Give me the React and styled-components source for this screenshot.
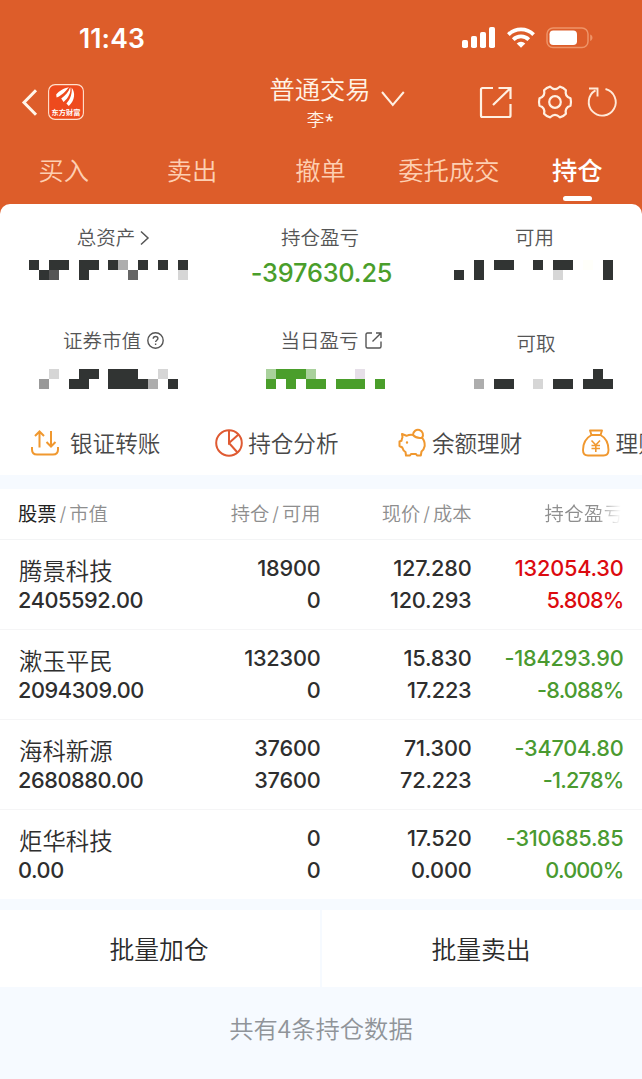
import styled, { createGlobalStyle } from "styled-components";

const GlobalStyle = createGlobalStyle`
  * {
    box-sizing: border-box;
  }
  body {
    margin: 0;
    background: #f6faff;
    font-family: "Noto Sans CJK SC", sans-serif;
    overflow: hidden;
  }
  svg {
    display: block;
    flex-shrink: 0;
    overflow: visible;
  }
`;

const Page = styled.div`
  width: 642px;
  height: 1079px;
  overflow: hidden;
  background: #f6faff;
  color: #333;
`;

const Header = styled.header`
  height: 214px;
  background: #dd5d2a;
  color: #fff;
`;

const StatusBar = styled.div`
  display: flex;
  align-items: center;
  justify-content: space-between;
  height: 75px;
  padding: 0 48px 0 79px;
`;

const Time = styled.span`
  font-family: Inter, sans-serif;
  font-size: 26.5px;
  font-weight: 600;
  letter-spacing: 0.1px;
`;

const StatusIcons = styled.div`
  display: flex;
  align-items: center;
  gap: 11px;
`;

const TitleBar = styled.div`
  display: grid;
  grid-template-columns: 1fr auto 1fr;
  align-items: center;
  height: 54px;
`;

const TitleLeft = styled.div`
  display: flex;
  align-items: center;
  gap: 11px;
  padding-left: 22px;
`;

const Title = styled.div`
  margin: -3px 2px -4px 0;
  text-align: center;
  color: #fff3e6;
`;

const TitleName = styled.div`
  font-size: 25.3px;
  font-weight: 350;
  line-height: 33px;
`;

const TitleUser = styled.div`
  font-size: 17.5px;
  font-weight: 350;
  line-height: 28px;

  span {
    display: inline-block;
    margin-left: 1px;
    font-family: Roboto, sans-serif;
    font-size: 19px;
    font-weight: 400;
    line-height: 20px;
    vertical-align: -1px;
  }
`;

const TitleRight = styled.div`
  display: flex;
  align-items: center;
  padding: 0 25px 0 8px;
`;

const DownWrap = styled.div`
  margin-top: -6px;
`;

const Actions = styled.div`
  display: flex;
  align-items: center;
  gap: 15px;
  margin-left: auto;

  svg:first-child {
    margin-right: 11px;
  }
`;

const Tabs = styled.nav`
  display: grid;
  grid-template-columns: repeat(5, 1fr);
  height: 75px;
`;

const Tab = styled.div`
  display: flex;
  flex-direction: column;
  align-items: center;
  font-size: 25.3px;
  line-height: 36px;
  padding: 22px 1px 0 0;
  font-weight: ${(props) => (props.$active ? 500 : 350)};
  color: ${(props) => (props.$active ? "#fff" : "#fdcfb2")};

  &::after {
    content: "";
    width: 29px;
    height: 5px;
    margin-top: 9px;
    border-radius: 3px;
    background: ${(props) => (props.$active ? "#fff" : "transparent")};
  }
`;

const Summary = styled.section`
  height: 271px;
  margin-top: -10px;
  background: #fff;
  border-radius: 10px 10px 0 0;
  overflow: hidden;
`;

const Stats = styled.div`
  display: grid;
  grid-template-columns: 216px 208px 218px;
  grid-template-rows: 103px 104px;
`;

const Stat = styled.div`
  display: flex;
  flex-direction: column;
  align-items: center;
  padding-top: ${(props) => props.$top || 18}px;
`;

const StatLabel = styled.div`
  display: flex;
  align-items: center;
  gap: ${(props) => props.$gap || 4}px;
  height: 28px;
  padding-left: ${(props) => props.$shift || 0}px;
  font-size: 19.5px;
  font-weight: 350;
  color: #555;

  svg {
    margin-top: 3px;
  }
`;

const StatValue = styled.div`
  font-family: Inter, sans-serif;
  font-size: 25.3px;
  font-weight: 500;
  line-height: 32px;
  letter-spacing: -0.15px;
  margin-top: 7px;
  padding-left: 3px;
  color: #4a9e2b;
`;

const MosaicBox = styled.div`
  margin-top: ${(props) => props.$gap}px;
  padding-left: ${(props) => props.$shift || 0}px;
`;

const Shortcuts = styled.div`
  display: flex;
  height: 63px;
  padding-left: 31px;
`;

const Shortcut = styled.div`
  display: flex;
  flex: 0 0 183.7px;
  align-items: center;
  gap: ${(props) => props.$gap || 5.5}px;
  height: 63px;
  font-size: 22.6px;
  font-weight: 350;
  white-space: nowrap;
  color: #484848;
`;

const Holdings = styled.section`
  margin-top: 14px;
  background: #fff;
`;

const Row = styled.div`
  display: grid;
  grid-template-columns: 150px 152.5px 151px 152px;
  padding: 0 18px 0 18px;
`;

const HeadRow = styled(Row)`
  height: 51px;
  align-items: center;
  padding-bottom: 2px;
  border-bottom: 1px solid #f3f4f5;
  font-size: 19.3px;
  font-weight: 350;
  color: #8e8e8e;
`;

const HeadCell = styled.div`
  white-space: nowrap;
  text-align: ${(props) => (props.$left ? "left" : "right")};

  b {
    font-weight: 400;
    color: #222;
  }
  i {
    font-family: Inter, sans-serif;
    font-style: normal;
    margin: 0 3px;
  }
`;

const FadeCell = styled(HeadCell)`
  letter-spacing: 0.5px;
  mask-image: linear-gradient(to right, #000 82%, transparent 98%);
`;

const StockRow = styled(Row)`
  height: 90px;
  padding-top: 13px;
  border-bottom: 1px solid #f5f5f6;

  &:last-child {
    height: 89px;
    border-bottom: 0;
  }
`;

const Cell = styled.div`
  display: flex;
  flex-direction: column;
  align-items: ${(props) => (props.$left ? "flex-start" : "flex-end")};
  font-family: Inter, sans-serif;
  font-size: 21.7px;
  font-weight: 500;
  line-height: 31.5px;
  letter-spacing: ${(props) => (props.$left ? -0.4 : -0.2)}px;
  color: ${(props) => props.$color || "#2e2e2e"};
`;

const StockName = styled.span`
  font-family: "Noto Sans CJK SC", sans-serif;
  font-size: 23.4px;
  font-weight: 350;
  letter-spacing: 0;
  line-height: 34px;
  margin: 0 0 -2.5px 1px;
`;

const Rate = styled.span`
  letter-spacing: -0.8px;
`;

const BatchBar = styled.div`
  display: grid;
  grid-template-columns: 1fr 1fr;
  gap: 2px;
  height: 77px;
  margin-top: 11px;
`;

const BatchButton = styled.button`
  border: 0;
  padding: 0 2px 1px 0;
  background: #fff;
  color: #2a2a2a;
  font-family: inherit;
  font-size: 24.8px;
  font-weight: 350;
`;

const Footer = styled.footer`
  padding-top: 23px;
  text-align: center;
  font-size: 24.3px;
  line-height: 36px;
  font-weight: 350;
  color: #909499;
`;

const cellColors = {
  "#": "#313433",
  d: "#555",
  m: "#666",
  g: "#999",
  b: "#adadad",
  l: "#d6d6d6",
  y: "#fffffa",
  G: "#4a9e2b",
  p: "#a9d19c",
  e: "#e6dfe8",
};

const Mosaic = ({ rows, gap, shift }) => {
  const size = 9.93;
  return (
    <MosaicBox $gap={gap} $shift={shift}>
      <svg width={rows[0].length * size} height="20" shapeRendering="crispEdges">
        {rows.map((row, y) =>
          row.split("").map((c, x) =>
            c === "." ? null : (
              <rect key={`${x}-${y}`} x={x * size} y={y * 10} width={size} height="10" fill={cellColors[c]} />
            )
          )
        )}
      </svg>
    </MosaicBox>
  );
};

const Signal = () => (
  <svg width="34" height="22" viewBox="0 0 34 22" fill="#fff">
    <rect x="0" y="13" width="6" height="8" rx="1.8" />
    <rect x="9" y="9" width="6" height="12" rx="1.8" />
    <rect x="18" y="5" width="6" height="16" rx="1.8" />
    <rect x="27" y="0" width="6" height="21" rx="1.8" />
  </svg>
);

const Wifi = () => (
  <svg width="28" height="21" viewBox="0 0 28 21">
    <g fill="none" stroke="#fff" strokeWidth="3.8">
      <path d="M1.4 7.6a18 18 0 0 1 25.2 0" />
      <path d="M6.2 12.6a11.2 11.2 0 0 1 15.6 0" />
    </g>
    <path d="M9.7 16.4a6.3 6.3 0 0 1 8.6 0L14 20.8z" fill="#fff" />
  </svg>
);

const Battery = () => (
  <svg width="48" height="22" viewBox="0 0 48 22">
    <rect x="1" y="1" width="41" height="19.5" rx="6" fill="none" stroke="#ee9468" strokeWidth="1.5" />
    <rect x="3.5" y="3.5" width="27.5" height="14.5" rx="3.8" fill="#fff" />
    <path d="M44.2 7.6c3 1 3 5.4 0 6.4z" fill="#ee9468" />
  </svg>
);

const BackIcon = () => (
  <svg width="15" height="27" viewBox="0 0 15 27" fill="none" stroke="#fff6ea" strokeWidth="3">
    <path d="M14 1.2 2 13.5 14 25.8" />
  </svg>
);

const BrandLogo = () => (
  <svg width="36" height="36" viewBox="0 0 36 36">
    <rect x="0.6" y="0.6" width="34.8" height="34.8" rx="6.5" fill="#ee4a1d" stroke="#ffe2cf" strokeWidth="1.1" />
    <path d="M8.2 10.6C11 7 15.5 4 21 3.2C18 6.5 14 11.5 8.6 13.6z" fill="#fff" />
    <path d="M13.2 14.6C17 12 20.5 8 22.2 3.3C23.4 8 20.5 14 15.6 18z" fill="#fff" />
    <path d="M18.4 19.4C22.5 15.5 24.4 9 23.6 3.6C27.6 8.5 27 16.5 20.8 22z" fill="#fff" />
    <text x="18" y="31" textAnchor="middle" fontSize="7.2" fontWeight="700" fill="#fff">
      东方财富
    </text>
  </svg>
);

const DownIcon = () => (
  <svg width="24" height="16" viewBox="0 0 24 16" fill="none" stroke="#fff0e2" strokeWidth="2">
    <path d="M1 1 11.8 14 22.8 1" />
  </svg>
);

const ShareIcon = () => (
  <svg width="32" height="33" viewBox="0 0 32 33" fill="none" stroke="#fff0e2" strokeWidth="2.2">
    <path d="M13 2H2.5Q1 2 1 3.5V29.5Q1 31 2.5 31H29Q30.5 31 30.5 29.5V18" />
    <path d="M18.5 2H30.5V13M30 2.5 13 19" />
  </svg>
);

const GearIcon = () => (
  <svg width="34" height="34" viewBox="-17 -17 34 34" fill="none" stroke="#fff0e2" strokeWidth="2.2" strokeLinejoin="round">
    <path d="M15.5 3.7Q9.5 5.5 10.9 11.7Q8.5 14.5 4.8 15.3Q0 10.6-4.8 15.3Q-8.5 14.5-10.9 11.7Q-9.5 5.5-15.5 3.7Q-16.5 0-15.5-3.7Q-9.5-5.5-10.9-11.7Q-8.5-14.5-4.8-15.3Q0-10.6 4.8-15.3Q8.5-14.5 10.9-11.7Q9.5-5.5 15.5-3.7Q16.5 0 15.5 3.7Z" />
    <circle r="5.8" />
  </svg>
);

const RefreshIcon = () => (
  <svg width="30" height="30" viewBox="0 0 30 30" fill="none" stroke="#ffe9d8" strokeWidth="1.9">
    <path d="M18.5 2A13.5 13.5 0 1 1 8.5 3.4" />
    <path d="M2 1.5H10.5V9.5" />
  </svg>
);

const RightIcon = () => (
  <svg width="9" height="14" viewBox="0 0 9 14" fill="none" stroke="#555" strokeWidth="1.5">
    <path d="M1 0.500 8 7 1 13.500" />
  </svg>
);

const HelpIcon = () => (
  <svg width="17" height="17" viewBox="0 0 17 17" fill="none" stroke="#555" strokeWidth="1.4">
    <circle cx="8.5" cy="8.5" r="7.7" />
    <path d="M6.2 6.8c0-3.2 4.7-3 4.7-.2 0 1.7-2.3 1.700-2.3 3.500M8.600 11.400v1.500" />
  </svg>
);

const OpenIcon = () => (
  <svg width="17" height="17" viewBox="0 0 17 17" fill="none" stroke="#555" strokeWidth="1.4">
    <path d="M7 1H2.5Q1 1 1 2.5V14.5Q1 16 2.5 16H14.5Q16 16 16 14.5V9.5" />
    <path d="M11 1H16V6M15.8 1.2 7.5 9.5" />
  </svg>
);

const TransferIcon = () => (
  <svg width="28" height="26" viewBox="0 0 28 26" fill="none" stroke="#f0982f" strokeWidth="2">
    <path d="M1 17v2.5Q1 24.5 6 24.5H22Q27 24.5 27 19.5V17" />
    <path d="M8.5 17.5V2M4 6 8.5 1.5 13 6M20 1V16.5M15.5 12 20 16.5 24.5 12" />
  </svg>
);

const PieIcon = () => (
  <svg width="28" height="28" viewBox="0 0 28 28" fill="none" stroke="#df5a32" strokeWidth="2">
    <circle cx="14" cy="14" r="12.8" />
    <path d="M14 1.2V14L23.5 5.5M14 14 22.5 23.5" />
  </svg>
);

const PiggyIcon = () => (
  <svg width="28" height="28" viewBox="0 0 28 28" fill="none" stroke="#f0982f" strokeWidth="2" strokeLinejoin="round">
    <path d="M4.5 8.2 4 5 8.5 6.8Q12 5.300 15 6Q18.500 9.800 24 8.800Q27 12 26.700 17Q26 20.500 23.500 22.500L22.800 26.500H19L18 25H13L12 26.500H8L7.500 23Q5 21.500 4.300 18.500L1.500 17V12.500L3.500 11.800Q3.700 10 4.500 8.200Z" />
    <path d="M15 6A5 5 0 1 1 24 8.800" />
    <circle cx="9" cy="13.500" r="0.600" fill="#f0982f" strokeWidth="1.200" />
  </svg>
);

const BagIcon = () => (
  <svg width="28" height="28" viewBox="0 0 28 28" fill="none" stroke="#f0982f" strokeWidth="1.9" strokeLinejoin="round">
    <path d="M8 1.5H20L18.5 6H9.5Z" />
    <path d="M9.5 6C4 9 1 15 1 21Q1 26.5 6 26.5H21.5Q26.5 26.5 26.5 21C26.5 15 24 9 18.5 6" />
    <path d="M9.5 11.5 13.8 16 18 11.5M13.8 16V23M9.5 16.5H18M9.5 19.5H18" strokeWidth="1.6" />
  </svg>
);

const tabs = ["买入", "卖出", "撤单", "委托成交", "持仓"];

const RED = "#dc0a0f";
const GREEN = "#4a9a30";

const stocks = [
  { name: "腾景科技", value: "2405592.00", held: "18900", usable: "0", price: "127.280", cost: "120.293", profit: "132054.30", rate: "5.808%", color: RED },
  { name: "漱玉平民", value: "2094309.00", held: "132300", usable: "0", price: "15.830", cost: "17.223", profit: "-184293.90", rate: "-8.088%", color: GREEN },
  { name: "海科新源", value: "2680880.00", held: "37600", usable: "37600", price: "71.300", cost: "72.223", profit: "-34704.80", rate: "-1.278%", color: GREEN },
  { name: "炬华科技", value: "0.00", held: "0", usable: "0", price: "17.520", cost: "0.000", profit: "-310685.85", rate: "0.000%", color: GREEN },
];

const App = () => {
  return (
    <>
      <GlobalStyle />
      <Page>
        <Header>
          <StatusBar>
            <Time>11:43</Time>
            <StatusIcons>
              <Signal />
              <Wifi />
              <Battery />
            </StatusIcons>
          </StatusBar>
          <TitleBar>
            <TitleLeft>
              <BackIcon />
              <BrandLogo />
            </TitleLeft>
            <Title>
              <TitleName>普通交易</TitleName>
              <TitleUser>
                李<span>*</span>
              </TitleUser>
            </Title>
            <TitleRight>
              <DownWrap>
                <DownIcon />
              </DownWrap>
              <Actions>
                <ShareIcon />
                <GearIcon />
                <RefreshIcon />
              </Actions>
            </TitleRight>
          </TitleBar>
          <Tabs>
            {tabs.map((tab) => (
              <Tab key={tab} $active={tab === "持仓"}>
                {tab}
              </Tab>
            ))}
          </Tabs>
        </Header>

        <Summary>
          <Stats>
            <Stat>
              <StatLabel $gap={5} $shift={10}>
                总资产
                <RightIcon />
              </StatLabel>
              <Mosaic gap={10} rows={["#.##.##.#b.#.#.#", ".#d..#....m....l"]} />
            </Stat>
            <Stat>
              <StatLabel>持仓盈亏</StatLabel>
              <StatValue>-397630.25</StatValue>
            </Stat>
            <Stat>
              <StatLabel $shift={3}>可用</StatLabel>
              <Mosaic gap={10} rows={["..#.##..#.##.y.#", "#.#.......l....#"]} />
            </Stat>
            <Stat>
              <StatLabel $gap={6} $shift={11}>
                证券市值
                <HelpIcon />
              </StatLabel>
              <Mosaic gap={16} rows={["..l..##.###..l..", ".g..##..####b.#."]} />
            </Stat>
            <Stat>
              <StatLabel $gap={6} $shift={22}>
                当日盈亏
                <OpenIcon />
              </StatLabel>
              <Mosaic gap={16} shift={11} rows={["pGGGp....e..", "G.G.GG.GGG.G"]} />
            </Stat>
            <Stat $top={21}>
              <StatLabel $shift={6}>可取</StatLabel>
              <Mosaic gap={13} rows={["..............#.", "..b.##..l.##.###"]} />
            </Stat>
          </Stats>
          <Shortcuts>
            <Shortcut $gap={11}>
              <TransferIcon />
              银证转账
            </Shortcut>
            <Shortcut>
              <PieIcon />
              持仓分析
            </Shortcut>
            <Shortcut>
              <PiggyIcon />
              余额理财
            </Shortcut>
            <Shortcut>
              <BagIcon />
              理财
            </Shortcut>
          </Shortcuts>
        </Summary>

        <Holdings>
          <HeadRow>
            <HeadCell $left>
              <b>股票</b>
              <i>/</i>市值
            </HeadCell>
            <HeadCell>
              持仓<i>/</i>可用
            </HeadCell>
            <HeadCell>
              现价<i>/</i>成本
            </HeadCell>
            <FadeCell>持仓盈亏</FadeCell>
          </HeadRow>
          {stocks.map((stock) => (
            <StockRow key={stock.name}>
              <Cell $left>
                <StockName>{stock.name}</StockName>
                <span>{stock.value}</span>
              </Cell>
              <Cell>
                <span>{stock.held}</span>
                <span>{stock.usable}</span>
              </Cell>
              <Cell>
                <span>{stock.price}</span>
                <span>{stock.cost}</span>
              </Cell>
              <Cell $color={stock.color}>
                <span>{stock.profit}</span>
                <Rate>{stock.rate}</Rate>
              </Cell>
            </StockRow>
          ))}
        </Holdings>

        <BatchBar>
          <BatchButton>批量加仓</BatchButton>
          <BatchButton>批量卖出</BatchButton>
        </BatchBar>
        <Footer>共有4条持仓数据</Footer>
      </Page>
    </>
  );
};

export default App;
